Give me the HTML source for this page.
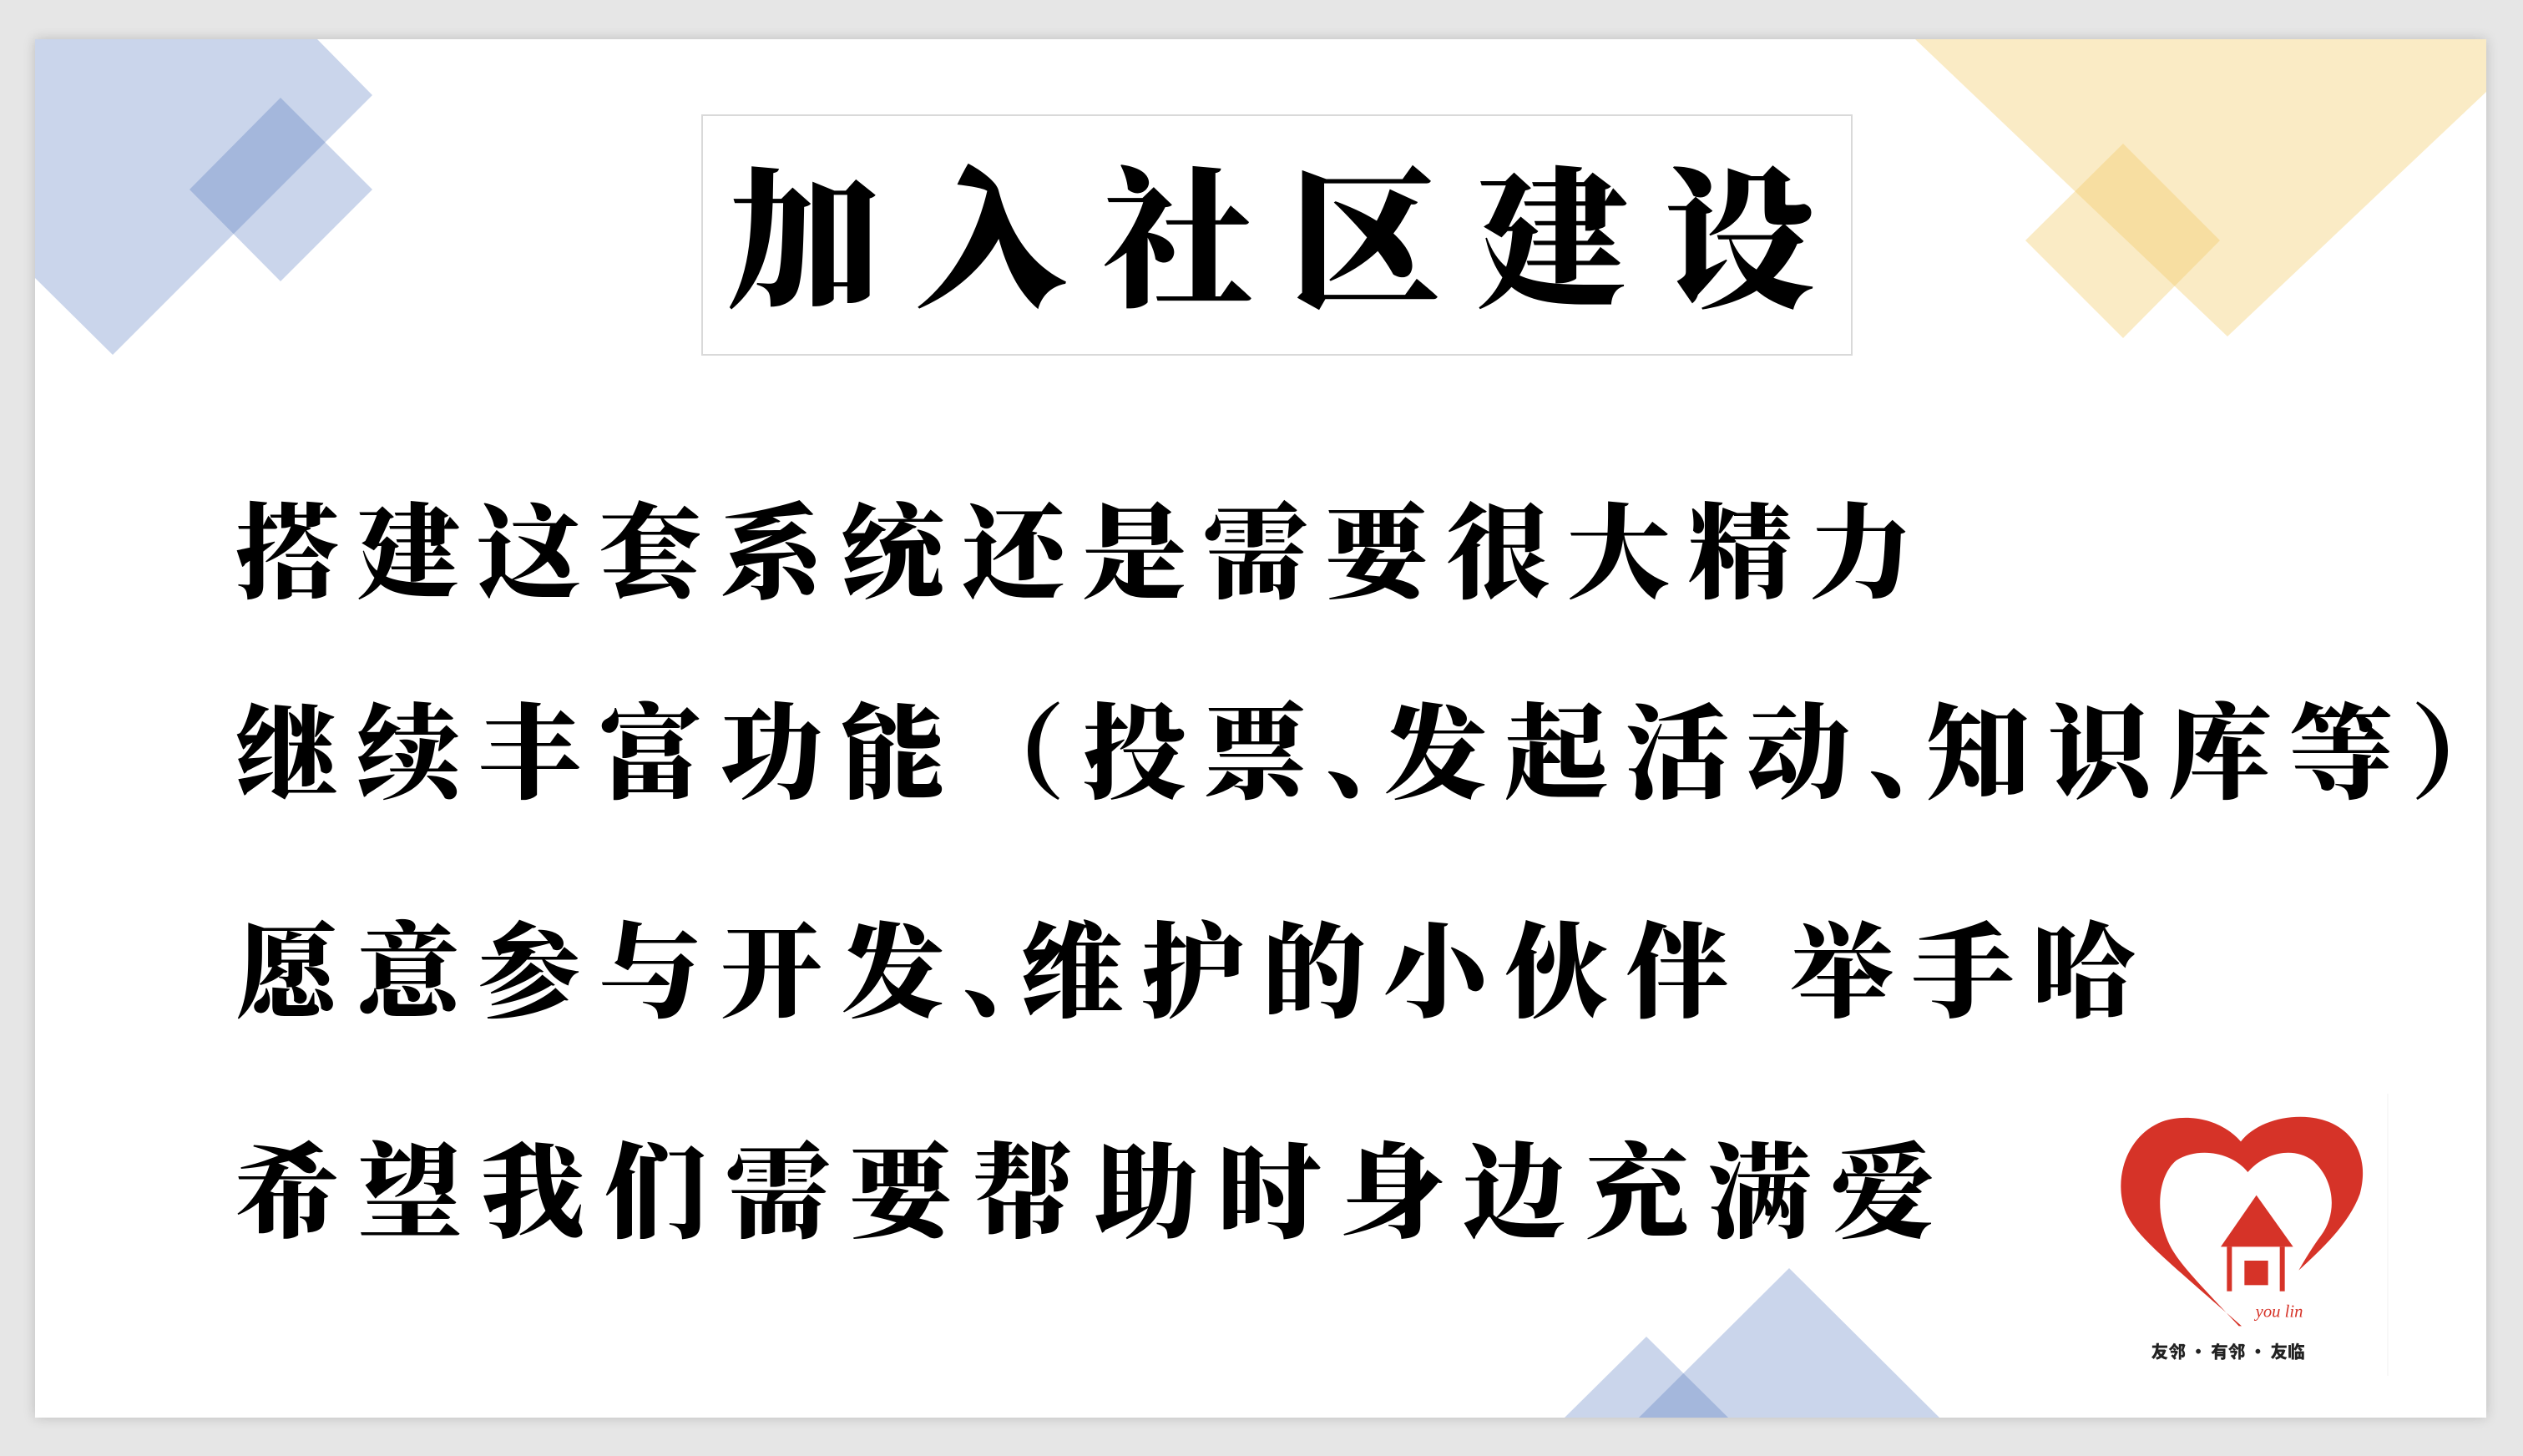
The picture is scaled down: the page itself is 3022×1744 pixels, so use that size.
<!DOCTYPE html>
<html><head><meta charset="utf-8"><style>
html,body{margin:0;padding:0}
body{width:3022px;height:1744px;background:#e6e6e6;position:relative;overflow:hidden;font-family:"Liberation Serif","Noto Serif CJK SC",serif}
.slide{position:absolute;left:42px;top:47px;width:2936px;height:1651px;background:#fff;box-shadow:0 0 14px rgba(0,0,0,.18)}
svg.bg{position:absolute;left:0;top:0}
.title{position:absolute;left:840px;top:137px;width:1375px;height:285px;border:2px solid #d9d9d9;background:#fff}
.title span{position:absolute;left:30px;top:63px;font-size:182px;font-weight:900;letter-spacing:42px;white-space:nowrap;line-height:1;color:#000}
.line{position:absolute;left:282px;font-size:124px;font-weight:900;letter-spacing:21px;white-space:nowrap;line-height:1;color:#000}
.c{display:inline-block;width:70px;overflow:visible;letter-spacing:0}
</style></head><body>
<div class="slide"></div>
<svg class="bg" width="3022" height="1744" viewBox="0 0 3022 1744">
<defs><clipPath id="cl"><rect x="42" y="47" width="2936" height="1651"/></clipPath></defs>
<g clip-path="url(#cl)">
<polygon points="42,47 380,47 446,114 135,425 42,333" fill="rgb(68,107,184)" fill-opacity=".283"/>
<polygon points="336,117 446,227 336,337 227,227" fill="rgb(68,107,184)" fill-opacity=".283"/>
<polygon points="2294,47 2978,47 2978,110 2668,403" fill="rgb(242,202,102)" fill-opacity=".38"/>
<polygon points="2543,172 2659,288 2543,405 2426,288" fill="rgb(242,202,102)" fill-opacity=".38"/>
<polygon points="1972,1601 2070,1698 1874,1698" fill="rgb(68,107,184)" fill-opacity=".283"/>
<polygon points="2143,1519 2323,1698 1963,1698" fill="rgb(68,107,184)" fill-opacity=".283"/>
</g>
<line x1="2860" y1="1310" x2="2860" y2="1648" stroke="#f0f0f0" stroke-width="1"/>
<svg x="2480" y="1280" width="420" height="380" viewBox="0 0 1260 1140">
<path d="M612 262 C540 180 420 160 330 190 C200 240 150 400 200 520 C240 600 300 650 615 925 L605 925 C450 760 380 690 350 620 C300 500 320 380 380 330 C460 280 580 300 637 372 C700 300 800 280 870 330 C950 400 960 520 900 600 C870 640 840 690 820 725 C900 650 1000 560 1040 450 C1080 300 1000 190 860 175 C760 165 660 200 612 262 Z" fill="#d63328"/>
<polygon points="668,455 800,640 540,640" fill="#d63328"/>
<rect x="562" y="640" width="18" height="160" fill="#d63328"/>
<rect x="752" y="640" width="18" height="160" fill="#d63328"/>
<rect x="625" y="690" width="85" height="88" fill="#d63328"/>
<text x="665" y="893" font-family="Liberation Serif,serif" font-style="italic" font-size="62" fill="#d63328">you lin</text>
<text x="290" y="1040" font-family="Noto Sans CJK SC,sans-serif" font-weight="900" font-size="62" fill="#222">友邻 · 有邻 · 友临</text>
</svg>
</svg>
<div class="title"><span>加入社区建设</span></div>
<div class="line" style="top:603px">搭建这套系统还是需要很大精力</div>
<div class="line" style="top:843px">继续丰富功能（投票<span class="c">、</span>发起活动<span class="c">、</span>知识库等）</div>
<div class="line" style="top:1105px">愿意参与开发<span class="c">、</span>维护的小伙伴 举手哈</div>
<div class="line" style="top:1369px;letter-spacing:23px">希望我们需要帮助时身边充满爱</div>
</body></html>
